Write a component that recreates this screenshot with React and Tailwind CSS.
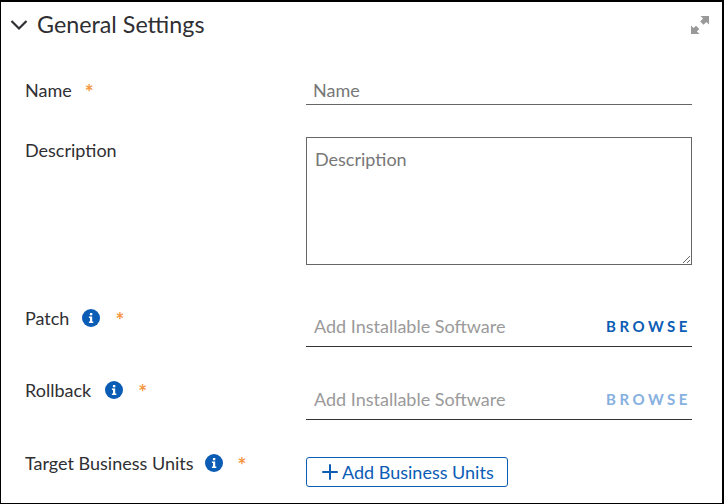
import { Plus } from 'lucide-react'

function InfoIcon() {
  return (
    <svg viewBox="0 0 18 18" className="w-[18px] h-[18px] shrink-0">
      <circle cx="9" cy="9" r="9" fill="#0b5cb5" />
      <rect x="7.9" y="4" width="2.4" height="2.3" fill="#fff" />
      <path d="M6.9 7.6h3.3v5h1.1v1.5H6.9v-1.5h1.1V9.1H6.9z" fill="#fff" />
    </svg>
  )
}

function ExpandIcon() {
  return (
    <svg viewBox="0 0 20 20" className="w-[20px] h-[20px]" fill="#999">
      <path d="M19 1v8.5l-2.6-2.6-2.9 2.9-3.3-3.3 2.9-2.9L10.5 1z" />
      <path d="M1 19v-8.5l2.6 2.6 2.4-2.4 3.3 3.3-2.4 2.4L9.5 19z" />
    </svg>
  )
}

function Label({ text, info, required, infoGap = 'ml-[11px]', className = '' }) {
  return (
    <div className={`flex items-center text-[18px] leading-6 text-[#2f2f33] ${className}`}>
      <span>{text}</span>
      {info && <span className={infoGap}><InfoIcon /></span>}
      {required && <span className={`${info ? 'ml-[15px]' : 'ml-[13px]'} h-6 leading-[28px] text-[21px] font-bold text-[#f7963f]`}>*</span>}
    </div>
  )
}

function BrowseField({ disabled }) {
  return (
    <div className="flex items-center h-[38px] border-b border-[#333] pl-2 pr-[1px] pb-[2px]">
      <input
        placeholder="Add Installable Software"
        className="flex-1 min-w-0 bg-transparent outline-none text-[18px] placeholder-[#9a9a9a]"
      />
      <button className={`text-[15px] font-bold tracking-[0.235em] ${disabled ? 'text-[#86b0e0]' : 'text-[#0b5cb5]'}`}>
        BROWSE
      </button>
    </div>
  )
}

export default function App() {
  return (
    <div
      className="w-[724px] h-[504px] overflow-hidden bg-white border border-black border-t-2 border-r-2 pl-[9px] pr-[30px]"
      style={{ fontFamily: 'Lato, "Open Sans", sans-serif' }}
    >
      <div className="flex items-center justify-between h-[45px] -mr-[18px]">
        <div className="flex items-center gap-[9px]">
          <svg viewBox="0 0 18 12" className="w-[18px] h-[12px]" fill="none" stroke="#2f2f33" strokeWidth="2.2">
            <path d="M1.5 2 9 9.5 16.5 2" />
          </svg>
          <h2 className="text-[23.3px] text-[#2f2f33]">General Settings</h2>
        </div>
        <ExpandIcon />
      </div>

      <div className="grid grid-cols-[296px_386px] items-start mt-[27px]">
        <Label text="Name" required className="pl-[15px] mt-[4px]" />
        <div className="h-[31px] border-b border-[#666] pl-[7px] pt-[4px]">
          <input placeholder="Name" className="w-full outline-none text-[18px] leading-6 placeholder-[#777]" />
        </div>

        <Label text="Description" className="pl-[15px] mt-[33px]" />
        <textarea
          placeholder="Description"
          className="w-full mt-[32px] h-[128px] border border-[#666] px-[8px] py-[9px] outline-none text-[18px] leading-6 placeholder-[#777]"
        />

        <Label text="Patch" info required infoGap="ml-[13px]" className="pl-[15px] mt-[41px]" />
        <div className="mt-[44px]"><BrowseField /></div>

        <Label text="Rollback" info required infoGap="ml-[14px]" className="pl-[15px] mt-[31px]" />
        <div className="mt-[35px]"><BrowseField disabled /></div>

        <Label text="Target Business Units" info required className="pl-[15px] mt-[31px]" />
        <div className="mt-[37px]">
          <button className="flex items-center pl-[11px] w-[202px] h-[30px] border border-[#0b5cb5] rounded-[3px] text-[18px] text-[#0b5cb5]">
            <Plus className="w-6 h-6" strokeWidth={2} />
            Add Business Units
          </button>
        </div>
      </div>
    </div>
  )
}
